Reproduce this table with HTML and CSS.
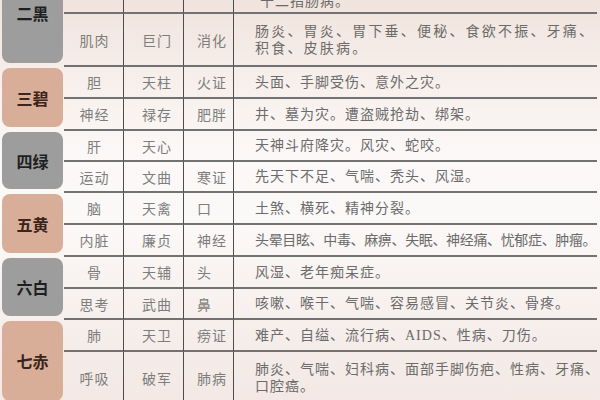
FILE: index.html
```html
<!DOCTYPE html>
<html lang="zh-CN">
<head>
<meta charset="utf-8">
<title>九星对应表</title>
<link rel="stylesheet" href="styles.css">
</head>
<body>
<div class="sheet">
  <div class="label gray">二黑</div>
  <div class="c c1"></div><div class="c c2"></div><div class="c c3"></div>
  <div class="c c4 cut">十二指肠病。</div>
  <div class="c c1">肌肉</div><div class="c c2">巨门</div><div class="c c3">消化</div>
  <div class="c c4 wide">肠炎、胃炎、胃下垂、便秘、食欲不振、牙痛、<br>积食、皮肤病。</div>

  <div class="label tan">三碧</div>
  <div class="c c1">胆</div><div class="c c2">天柱</div><div class="c c3">火证</div>
  <div class="c c4">头面、手脚受伤、意外之灾。</div>
  <div class="c c1">神经</div><div class="c c2">禄存</div><div class="c c3">肥胖</div>
  <div class="c c4">井、墓为灾。遭盗贼抢劫、绑架。</div>

  <div class="label gray">四绿</div>
  <div class="c c1">肝</div><div class="c c2">天心</div><div class="c c3"></div>
  <div class="c c4">天神斗府降灾。风灾、蛇咬。</div>
  <div class="c c1">运动</div><div class="c c2">文曲</div><div class="c c3">寒证</div>
  <div class="c c4">先天下不足、气喘、秃头、风湿。</div>

  <div class="label tan">五黄</div>
  <div class="c c1">脑</div><div class="c c2">天禽</div><div class="c c3">口</div>
  <div class="c c4">土煞、横死、精神分裂。</div>
  <div class="c c1">内脏</div><div class="c c2">廉贞</div><div class="c c3">神经</div>
  <div class="c c4 tight">头晕目眩、中毒、麻痹、失眠、神经痛、忧郁症、肿瘤。</div>

  <div class="label gray">六白</div>
  <div class="c c1">骨</div><div class="c c2">天辅</div><div class="c c3">头</div>
  <div class="c c4">风湿、老年痴呆症。</div>
  <div class="c c1">思考</div><div class="c c2">武曲</div><div class="c c3">鼻</div>
  <div class="c c4">咳嗽、喉干、气喘、容易感冒、关节炎、骨疼。</div>

  <div class="label tan">七赤</div>
  <div class="c c1">肺</div><div class="c c2">天卫</div><div class="c c3">痨证</div>
  <div class="c c4">难产、自缢、流行病、AIDS、性病、刀伤。</div>
  <div class="c c1">呼吸</div><div class="c c2">破军</div><div class="c c3">肺病</div>
  <div class="c c4">肺炎、气喘、妇科病、面部手脚伤疤、性病、牙痛、<br>口腔癌。</div>
</div>
</body>
</html>
```

FILE: styles.css
```css
html, body {
  margin: 0;
  padding: 0;
  width: 600px;
  height: 400px;
  overflow: hidden;
}

body {
  background: linear-gradient(to bottom,
    #f1e3dd 0%,
    #f6eeea 18%,
    #fbf8f7 38%,
    #fbf9f8 55%,
    #f8f2f0 72%,
    #f3e8e4 100%);
  font-family: "Liberation Serif", "Noto Sans CJK SC", serif;
}

.sheet {
  width: 597px;
  margin-top: -38px;
  display: grid;
  grid-template-columns: 64px 60px 60px 50px 363px;
  grid-template-rows: 52px 53px 32px 32px 31px 31px 32px 32px 32px 31px 32px 53px;
}

.label {
  grid-row: span 2;
  margin: 1px 1px 4px 2px;
  border-radius: 8px;
  display: flex;
  align-items: center;
  justify-content: center;
  font-family: "Noto Sans CJK SC", sans-serif;
  font-weight: 700;
  font-size: 16px;
}

.gray {
  background: #9d9d9d;
  color: #1f1f1f;
}

.tan {
  background: #d9ae98;
  color: #3a241b;
}

.c {
  box-sizing: border-box;
  display: flex;
  align-items: center;
  border-bottom: 2px solid #727272;
  border-right: 1px solid #4d4d4d;
  font-size: 14px;
  letter-spacing: 1px;
  color: #7d7d7d;
  white-space: nowrap;
}

.c1 {
  justify-content: center;
  padding-left: 2px;
}

.c2 {
  justify-content: center;
  padding-left: 7px;
}

.c3 {
  padding-left: 13px;
}

.c4 {
  border-right: none;
  padding-left: 21px;
  color: #6b6b6b;
  line-height: 17px;
}

.cut {
  align-items: flex-end;
  padding-left: 26px;
  padding-bottom: 2px;
}

.wide {
  letter-spacing: 2.2px;
}

.tight {
  letter-spacing: -0.35px;
}
```
